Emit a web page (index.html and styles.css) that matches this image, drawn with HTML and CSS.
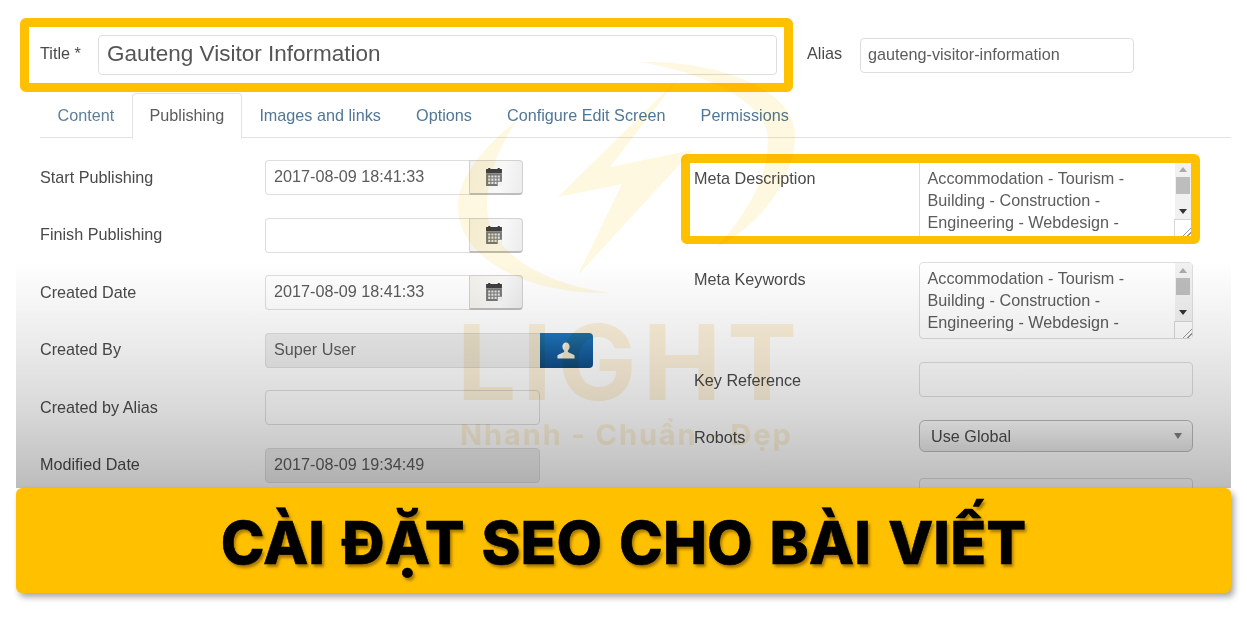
FILE: index.html
```html
<!DOCTYPE html>
<html lang="vi">
<head>
<meta charset="utf-8">
<title>Cài đặt SEO cho bài viết</title>
<link rel="stylesheet" href="styles.css">
</head>
<body>
<div class="page">
  <div class="form">
    <div class="title-row">
      <div class="title-box">
        <span class="title-label">Title *</span>
        <div class="field title-input">Gauteng Visitor Information</div>
      </div>
      <span class="alias-label">Alias</span>
      <div class="field alias-input">gauteng-visitor-information</div>
    </div>

    <nav class="tabs">
      <a class="tab plain">Content</a>
      <a class="tab active">Publishing</a>
      <a class="tab">Images and links</a>
      <a class="tab">Options</a>
      <a class="tab">Configure Edit Screen</a>
      <a class="tab">Permissions</a>
    </nav>

    <div class="columns">
      <div class="left">
        <div class="row">
          <label>Start Publishing</label>
          <div class="group">
            <div class="field date">2017-08-09 18:41:33</div>
            <div class="cal-btn"><svg class="cal" viewBox="0 0 15 17"><use href="#cal"/></svg></div>
          </div>
        </div>
        <div class="row">
          <label>Finish Publishing</label>
          <div class="group">
            <div class="field date"></div>
            <div class="cal-btn"><svg class="cal" viewBox="0 0 15 17"><use href="#cal"/></svg></div>
          </div>
        </div>
        <div class="row">
          <label>Created Date</label>
          <div class="group">
            <div class="field date">2017-08-09 18:41:33</div>
            <div class="cal-btn"><svg class="cal" viewBox="0 0 15 17"><use href="#cal"/></svg></div>
          </div>
        </div>
        <div class="row">
          <label>Created By</label>
          <div class="group">
            <div class="field wide readonly">Super User</div>
            <div class="user-btn">
              <svg class="user" viewBox="0 0 20 18"><path d="M10 0C7.600 0 6 2 6 4.600c0 1.900.8 3.500 1.900 4.400v1.800L1.500 13.600c-.8.4-1 .9-1 1.600V18h19v-2.800c0-.7-.2-1.200-1-1.600l-6.400-2.800V9c1.100-.9 1.900-2.500 1.900-4.400C14 2 12.400 0 10 0z" fill="#f2f2ee"/></svg>
            </div>
          </div>
        </div>
        <div class="row">
          <label>Created by Alias</label>
          <div class="field wide"></div>
        </div>
        <div class="row">
          <label>Modified Date</label>
          <div class="field wide readonly">2017-08-09 19:34:49</div>
        </div>
      </div>

      <div class="right">
        <div class="meta-box">
          <label>Meta Description</label>
          <div class="area">
            <div class="area-text">Accommodation - Tourism - Building - Construction - Engineering - Webdesign -</div>
            <div class="scroll">
              <span class="arrow up"></span>
              <span class="thumb"></span>
              <span class="arrow down"></span>
              <span class="resizer"></span>
            </div>
          </div>
        </div>
        <div class="meta-row keywords">
          <label>Meta Keywords</label>
          <div class="area">
            <div class="area-text">Accommodation - Tourism - Building - Construction - Engineering - Webdesign -</div>
            <div class="scroll">
              <span class="arrow up"></span>
              <span class="thumb"></span>
              <span class="arrow down"></span>
              <span class="resizer"></span>
            </div>
          </div>
        </div>
        <div class="meta-row key-ref">
          <label>Key Reference</label>
          <div class="field"></div>
        </div>
        <div class="meta-row robots">
          <label>Robots</label>
          <div class="select">Use Global<span class="caret"></span></div>
        </div>
        <div class="meta-row last">
          <label></label>
          <div class="field"></div>
        </div>
      </div>
    </div>
  </div>

  <div class="shade"></div>

  <div class="mark">
    <svg class="mark-logo" viewBox="440 50 380 250">
      <path d="M640 62C720 60 795 90 795 135C795 180 760 225 717 247C745 215 768 180 768 140C768 100 700 72 640 62Z"/>
      <path d="M517 120C480 150 458 180 458 207C458 260 530 295 610 293C550 285 487 255 487 207C487 175 500 145 517 120Z"/>
      <path d="M677 80L558 197L622 184L578 275L693 150L610 167Z"/>
    </svg>
    <div class="mark-name">LIGHT</div>
    <div class="mark-slogan">Nhanh - Chuẩn - Đẹp</div>
  </div>

  <div class="banner"><h1>CÀI ĐẶT SEO CHO BÀI VIẾT</h1></div>
</div>

<svg class="defs" width="0" height="0">
  <symbol id="cal" viewBox="0 0 15 17">
    <path d="M0 1h2V0h2v1h7V0h2v1h2v4H0z" fill="#3f3f3f"/>
    <path d="M0 5h15v12H0z" fill="#777"/>
    <path d="M2 7h2v2H2zM5 7h2v2H5zM8 7h2v2H8zM11 7h2v2h-2zM2 10h2v2H2zM5 10h2v2H5zM8 10h2v2H8zM11 10h2v2h-2zM2 13h2v2H2zM5 13h2v2H5zM8 13h2v2H8z" fill="#e4e4e4"/>
    <path d="M11 13h4v4h-4z" fill="#f4f4f4"/>
  </symbol>
</svg>
</body>
</html>
```

FILE: styles.css
```css
* { box-sizing: border-box; }
html, body { margin: 0; padding: 0; background: #fff; }
body { font-family: "Liberation Sans", Arial, sans-serif; color: #444; }

.page {
  position: relative;
  width: 1247px;
  height: 620px;
  overflow: hidden;
  background: #fff;
}

.form { padding-top: 18px; filter: blur(0.45px); }

.field {
  display: flex;
  align-items: center;
  height: 35px;
  padding: 0 8px 2px;
  font-size: 16.200px;
  color: #5c5c5c;
  background: #fff;
  border: 1.500px solid #dedede;
  border-radius: 4px;
  white-space: nowrap;
}

label { font-size: 16.200px; color: #4a4a4a; }
.row label { padding-bottom: 1px; }

/* Title row */
.title-row { display: flex; align-items: center; padding-left: 20px; }
.title-box {
  display: flex;
  align-items: center;
  width: 773px;
  height: 74px;
  padding: 0 7px 0 11px;
  border: 9px solid #ffc000;
  border-radius: 6px;
}
.title-label { width: 58px; padding-bottom: 4px; font-size: 16.200px; color: #4a4a4a; }
.title-input { flex: 1; height: 40px; font-size: 22.500px; color: #555; }
.alias-label { margin-left: 14px; width: 53px; padding-bottom: 4px; font-size: 16.200px; color: #4a4a4a; }
.alias-input { width: 274px; padding-left: 7px; }

/* Tabs */
.tabs {
  display: flex;
  height: 45px;
  margin: 1px 16px 0 40px;
  border-bottom: 1.500px solid #e2e2e2;
}
.tab {
  display: flex;
  align-items: center;
  margin-bottom: -1.500px;
  padding: 0 16.600px;
  font-size: 16.200px;
  color: #517797;
  border: 1px solid transparent;
}
.tab.plain { color: #5e7f9c; }
.tab.active {
  color: #5c5c5c;
  background: #fff;
  border-color: #e2e2e2;
  border-bottom-color: #fff;
  border-radius: 4px 4px 0 0;
}

/* Columns */
.columns { display: flex; }
.left {
  display: flex;
  flex-direction: column;
  gap: 22.500px;
  width: 681px;
  padding: 22px 0 0 40px;
}
.row { display: flex; align-items: center; height: 35px; }
.row label { width: 225px; }
.group { display: flex; }
.date { width: 204px; border-right: 0; border-radius: 4px 0 0 4px; }
.wide { width: 275px; }
.readonly { background: #eee; }
.group .wide { border-right: 0; border-radius: 4px 0 0 4px; }
.cal-btn {
  display: flex;
  align-items: center;
  justify-content: center;
  width: 54px;
  height: 35px;
  padding-right: 5px;
  background: linear-gradient(100deg, #f4f2ec, #f8f8f8 60%, #ececec);
  border: 1px solid #d2d2d2;
  border-bottom: 2px solid #bdbdbd;
  border-radius: 0 4px 4px 0;
}
.cal { width: 16px; height: 18px; }
.user-btn {
  display: flex;
  align-items: center;
  justify-content: center;
  width: 53px;
  height: 35px;
  padding-right: 2px;
  background: linear-gradient(#1f76bf, #0f4c86);
  border-radius: 0 4px 4px 0;
}
.user { width: 18px; height: 17px; }

/* Right column */
.right { width: 519px; padding-top: 16px; }
.meta-box {
  display: grid;
  grid-template-columns: 225px 274px;
  height: 90px;
  padding-left: 4px;
  overflow: hidden;
  border-style: solid;
  border-color: #ffc000;
  border-width: 9px 9px 8px;
  border-radius: 6px;
  background: #fff;
}
.meta-row {
  display: grid;
  grid-template-columns: 225px 274px;
  padding-left: 13px;
}
.meta-box label { padding-top: 6px; }
.keywords label { padding-top: 8px; }
.keywords { margin-top: 18px; }
.key-ref { margin-top: 23px; align-items: center; }
.key-ref label { padding-top: 2px; }
.robots { margin-top: 23px; align-items: center; }
.robots label { padding-top: 3px; }
.last { margin-top: 26px; }

.area {
  display: flex;
  height: 77px;
  background: #fff;
  border: 1.500px solid #dedede;
  border-radius: 4px;
}
.meta-box .area {
  margin-top: -3px;
  border-top: 0;
  border-radius: 0;
}
.area-text {
  flex: 1;
  padding: 4px 6px 0 7.500px;
  font-size: 16.200px;
  line-height: 22px;
  color: #5c5c5c;
  overflow: hidden;
}
.meta-box .area-text { padding-top: 7px; }
.scroll {
  position: relative;
  display: flex;
  flex-direction: column;
  align-items: center;
  width: 17px;
  flex: none;
  margin-right: .5px;
  background: #f1f1f1;
}
.arrow {
  width: 0;
  height: 0;
  border-left: 4.500px solid transparent;
  border-right: 4.500px solid transparent;
}
.arrow.up { margin-top: 5px; border-bottom: 5px solid #aaa; }
.arrow.down { margin-top: 15px; border-top: 5px solid #333; }
.thumb { width: 14px; height: 17px; margin-top: 5px; background: #bdbdbd; }
.meta-box .arrow.up { margin-top: 7px; }
.resizer {
  position: absolute;
  right: 0;
  bottom: 0;
  width: 18px;
  height: 17px;
  background:
    linear-gradient(135deg, transparent 70%, #999 70%, #999 75%, transparent 75%, transparent 83%, #999 83%, #999 88%, transparent 88%),
    #fff;
  border-top: 1px solid #d6d6d6;
  border-left: 1px solid #d6d6d6;
}

.select {
  position: relative;
  display: flex;
  align-items: center;
  height: 32px;
  padding: 1px 0 0 11px;
  font-size: 16.200px;
  color: #4a4a4a;
  background: linear-gradient(#fff, #eaeaea);
  border: 1.500px solid #bdbdbd;
  border-radius: 6px;
}
.caret {
  position: absolute;
  right: 10px;
  top: 12px;
  width: 0;
  height: 0;
  border-left: 4.500px solid transparent;
  border-right: 4.500px solid transparent;
  border-top: 6px solid #808080;
}

/* Gradient veil over the lower part of the form */
.shade {
  position: absolute;
  left: 16px;
  top: 262px;
  width: 1215px;
  height: 226px;
  background: linear-gradient(#fff, #ececec 35%, #d9d9d9 65%, #bcbcbc);
  mix-blend-mode: multiply;
  pointer-events: none;
}

/* Watermark */
.mark {
  position: absolute;
  left: 440px;
  top: 50px;
  width: 380px;
  height: 410px;
  mix-blend-mode: multiply;
  pointer-events: none;
}
.mark-logo {
  display: block;
  width: 380px;
  height: 250px;
  fill: #ffc000;
  opacity: 0.12;
}
.mark-name {
  margin: 7px 0 0 17px;
  font-family: Inter, "Liberation Sans", sans-serif;
  font-size: 105px;
  line-height: 110px;
  font-weight: 700;
  letter-spacing: 6px;
  white-space: nowrap;
  color: #fcf1da;
}
.mark-slogan {
  margin: 1px 0 0 20px;
  font-family: Inter, "Liberation Sans", sans-serif;
  font-size: 29px;
  line-height: 34px;
  font-weight: 700;
  letter-spacing: 1.900px;
  white-space: nowrap;
  color: #fcf1da;
}

/* Banner */
.banner {
  position: absolute;
  left: 16px;
  top: 488px;
  display: flex;
  align-items: center;
  justify-content: center;
  width: 1215px;
  height: 105px;
  padding-top: 4px;
  background: #ffc000;
  border-radius: 6px;
  box-shadow: 3px 4px 6px rgba(0, 0, 0, 0.35);
}
.banner h1 {
  margin: 0;
  font-family: Inter, "Noto Sans", sans-serif;
  font-size: 59px;
  font-weight: 800;
  line-height: 1;
  word-spacing: 4px;
  color: #000;
  white-space: nowrap;
  -webkit-text-stroke: 0.5px #000;
  text-shadow: 2px 3px 3px rgba(80, 50, 0, 0.5);
}

.defs { position: absolute; }
```
